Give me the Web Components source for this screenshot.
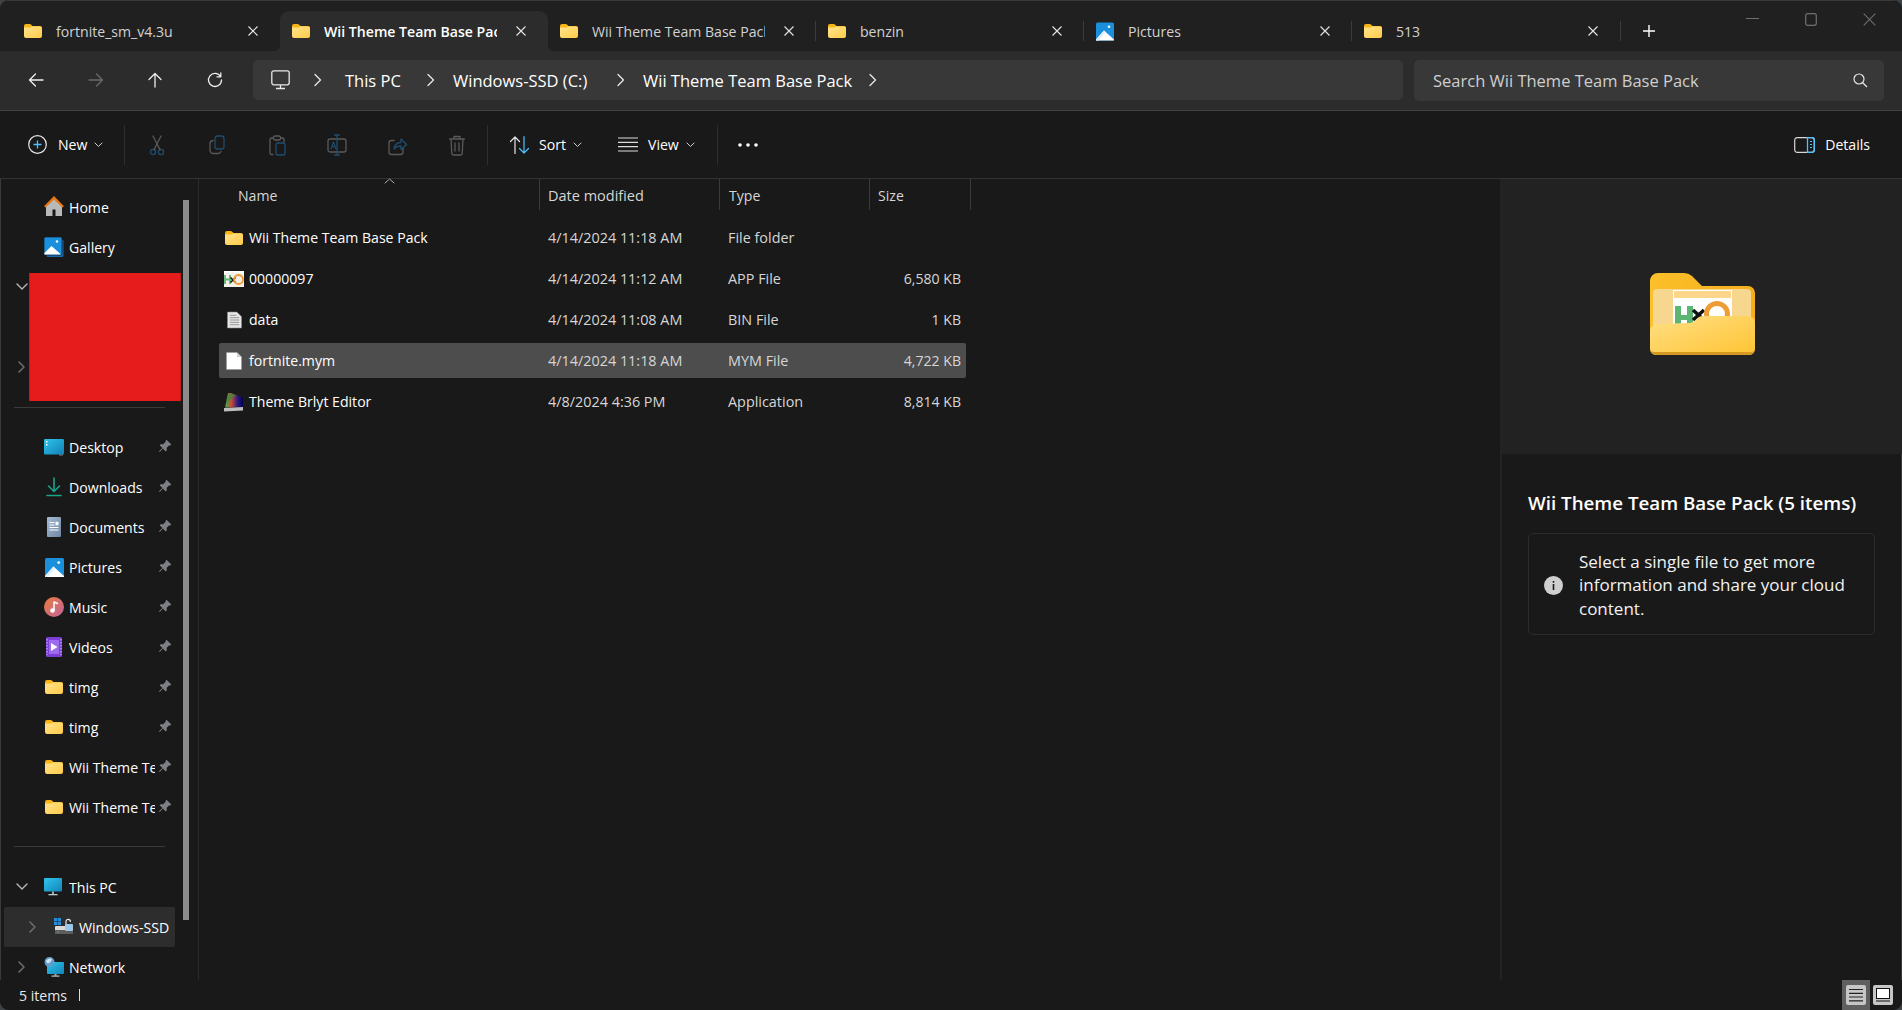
<!DOCTYPE html>
<html lang="en"><head><meta charset="utf-8"><title>File Explorer</title>
<style>
html,body{margin:0;height:100%;background:#3d4247;overflow:hidden}
body{font-family:"Open Sans","Noto Sans",sans-serif;color:#fff}
</style></head>
<body>
<fx-window>
  <fx-tabbar slot="tabs">
    <fx-tab icon="folder">fortnite_sm_v4.3u</fx-tab>
    <fx-tab icon="folder" active>Wii Theme Team Base Pack</fx-tab>
    <fx-tab icon="folder">Wii Theme Team Base Pack</fx-tab>
    <fx-tab icon="folder" sep>benzin</fx-tab>
    <fx-tab icon="pictures" sep>Pictures</fx-tab>
    <fx-tab icon="folder" sep>513</fx-tab>
  </fx-tabbar>
  <fx-navbar slot="nav"></fx-navbar>
  <fx-commandbar slot="cmd"></fx-commandbar>
  <fx-sidebar slot="side">
    <fx-nav-item icon="home">Home</fx-nav-item>
    <fx-nav-item icon="gallery">Gallery</fx-nav-item>
    <fx-redacted></fx-redacted>
    <fx-divider></fx-divider>
    <fx-nav-item icon="desktop" pin>Desktop</fx-nav-item>
    <fx-nav-item icon="downloads" pin>Downloads</fx-nav-item>
    <fx-nav-item icon="documents" pin>Documents</fx-nav-item>
    <fx-nav-item icon="pictures" pin>Pictures</fx-nav-item>
    <fx-nav-item icon="music" pin>Music</fx-nav-item>
    <fx-nav-item icon="videos" pin>Videos</fx-nav-item>
    <fx-nav-item icon="folder" pin>timg</fx-nav-item>
    <fx-nav-item icon="folder" pin>timg</fx-nav-item>
    <fx-nav-item icon="folder" pin>Wii Theme Team Base Pack</fx-nav-item>
    <fx-nav-item icon="folder" pin>Wii Theme Team Base Pack</fx-nav-item>
    <fx-divider tall></fx-divider>
    <fx-nav-item icon="pc" chevron="down">This PC</fx-nav-item>
    <fx-nav-item icon="drive" chevron="right" indent selected>Windows-SSD (C:)</fx-nav-item>
    <fx-nav-item icon="network" chevron="right">Network</fx-nav-item>
  </fx-sidebar>
  <fx-filelist slot="files">
    <fx-file icon="folder" date="4/14/2024 11:18 AM" type="File folder" size="">Wii Theme Team Base Pack</fx-file>
    <fx-file icon="hxd" date="4/14/2024 11:12 AM" type="APP File" size="6,580 KB">00000097</fx-file>
    <fx-file icon="textfile" date="4/14/2024 11:08 AM" type="BIN File" size="1 KB">data</fx-file>
    <fx-file icon="blank" date="4/14/2024 11:18 AM" type="MYM File" size="4,722 KB" selected>fortnite.mym</fx-file>
    <fx-file icon="brlyt" date="4/8/2024 4:36 PM" type="Application" size="8,814 KB">Theme Brlyt Editor</fx-file>
  </fx-filelist>
  <fx-details slot="details"></fx-details>
  <fx-statusbar slot="status"></fx-statusbar>
</fx-window>
<script>
const folderSvg=(id)=>`<svg viewBox="0 0 18 14" width="18" height="14"><path d="M0 2a2 2 0 0 1 2-2h3.6a2 2 0 0 1 1.3.5L8.6 2H16a2 2 0 0 1 2 2v3H0z" fill="#f7b516"/><path d="M0 3.6h6.5l1.4-1H16a2 2 0 0 1 2 2V12a2 2 0 0 1-2 2H2a2 2 0 0 1-2-2z" fill="url(#${id})"/><defs><linearGradient id="${id}" x1="0" y1="0" x2="1" y2="1"><stop offset="0" stop-color="#ffe48f"/><stop offset="1" stop-color="#ffcb47"/></linearGradient></defs></svg>`;
const picSvg=(w=19,h=19)=>`<svg viewBox="0 0 18 18" width="${w}" height="${h}"><rect width="18" height="18" rx="1.5" fill="#1a8fdc"/><circle cx="13" cy="4.3" r="1.3" fill="#fff"/><path d="M0 17 8 8l10 9v1H0z" fill="#fff"/><path d="M0 17 8 8l1.5 1.4L3 18H0z" fill="#dfeefa"/></svg>`;
const S=(c,w=1.3)=>`fill="none" stroke="${c}" stroke-width="${w}" stroke-linecap="round" stroke-linejoin="round"`;
const G='#5a5a5a',B='#1f4d6e';
const ICONS={
 folder:()=>folderSvg('f'+Math.random().toString(36).slice(2)),
 pictures:()=>picSvg(),
 home:()=>`<svg viewBox="0 0 20 20" width="20" height="20"><path d="M2 9v11h6.500v-6.500h3V20H18V9l-8-6.500z" fill="#b9b9b9"/><path d="M0 10.200 10 0l10 10.200-1.600 1.300L10 3.500 1.600 11.500z" fill="#e8760f"/></svg>`,
 gallery:()=>`<svg viewBox="0 0 20 20" width="20" height="20"><rect x="2.5" y="2.5" width="17" height="17.5" rx="1.5" fill="#1d66b0"/><rect width="18" height="18" rx="1.5" fill="#1a8fdc" stroke="#191919" stroke-width=".7"/><circle cx="13" cy="4.5" r="1.2" fill="#fff"/><path d="M.4 16 7.5 9l9 8v.6H.4z" fill="#fff"/></svg>`,
 desktop:()=>`<svg viewBox="0 0 20 17" width="20" height="17"><defs><linearGradient id="dk" x1="0" y1="0" x2="1" y2="1"><stop offset="0" stop-color="#2ec4ea"/><stop offset="1" stop-color="#1380b8"/></linearGradient></defs><rect width="20" height="15.5" rx="1.2" fill="url(#dk)"/><rect x="2" y="2" width="1.5" height="1.5" fill="#fff"/><rect x="2" y="5" width="1.5" height="1.5" fill="#fff"/><rect x="15.500" y="15.500" width="1" height="1" fill="#cde"/><rect x="17.500" y="15.500" width="1" height="1" fill="#cde"/></svg>`,
 downloads:()=>`<svg viewBox="0 0 20 20" width="20" height="20"><path d="M10 1v13M4.500 9l5.500 5.500L15.500 9M3 18.500h14" ${S('#1aa38a',1.6)}/></svg>`,
 documents:()=>`<svg viewBox="0 0 20 20" width="20" height="20"><defs><linearGradient id="dc" x1="0" y1="0" x2="1" y2="1"><stop offset="0" stop-color="#a5bad2"/><stop offset="1" stop-color="#6f88a4"/></linearGradient></defs><rect x="3" y="0" width="14" height="20" rx="1" fill="url(#dc)"/><path d="M5.500 5.500h5M5.500 8h5M5.500 10.500h9M5.500 13h9" stroke="#fff" stroke-width="1"/><rect x="11.500" y="4.800" width="3" height="3.500" fill="#fff"/></svg>`,
 music:()=>`<svg viewBox="0 0 20 20" width="20" height="20"><defs><linearGradient id="mu" x1="0" y1="0" x2="1" y2="1"><stop offset="0" stop-color="#ea7b3e"/><stop offset="1" stop-color="#c1649c"/></linearGradient></defs><circle cx="10" cy="10" r="10" fill="url(#mu)"/><circle cx="8.500" cy="13.500" r="2.300" fill="#fff"/><path d="M10 13.500V5l3.500 1.500" ${S('#fff',1.5)}/></svg>`,
 videos:()=>`<svg viewBox="0 0 16 20" width="16" height="20"><rect width="16" height="20" rx="1.5" fill="#7c3fd6"/><rect x="3" y="3" width="10" height="14" fill="#9d6bee"/><path d="M1 2v16M15 2v16" stroke="#c8aef5" stroke-width="1.200" stroke-dasharray="1.500 1.500"/><path d="M5 6l6.500 4L5 14z" fill="#fff"/></svg>`,
 pc:()=>`<svg viewBox="0 0 20 19" width="20" height="19"><defs><linearGradient id="pc" x1="0" y1="0" x2="1" y2="1"><stop offset="0" stop-color="#2fc6ea"/><stop offset="1" stop-color="#1284bb"/></linearGradient></defs><rect y="0" width="18" height="13.500" rx="1" fill="url(#pc)"/><rect x="8" y="13.500" width="2" height="2.500" fill="#9aa"/><rect x="4.500" y="16" width="9" height="1.300" fill="#bcc"/></svg>`,
 drive:()=>`<svg viewBox="0 0 20 18" width="20" height="18"><g fill="#1f8fe0"><rect x="0" y="0" width="3.200" height="3.200"/><rect x="3.800" y="0" width="3.200" height="3.200"/><rect x="0" y="3.800" width="3.200" height="3.200"/><rect x="3.800" y="3.800" width="3.200" height="3.200"/></g><rect x="1" y="8" width="18" height="8" rx="1" fill="#d9d9d9"/><rect x="1" y="12" width="18" height="4" fill="#5d5d5d"/><rect x="3" y="13.500" width="1.500" height="1" fill="#3fd04f"/><path d="M12 7V3.500a2.200 2.200 0 0 1 4.400 0" ${S('#e5e5e5',1.2)}/><rect x="11" y="6" width="8" height="7" rx="1" fill="#9cc7e6"/></svg>`,
 network:()=>`<svg viewBox="0 0 20 20" width="20" height="20"><defs><linearGradient id="nw" x1="0" y1="0" x2="1" y2="1"><stop offset="0" stop-color="#2fc6ea"/><stop offset="1" stop-color="#1284bb"/></linearGradient></defs><rect x="3" y="5" width="17" height="12" rx="1" fill="url(#nw)"/><rect x="10.500" y="17" width="2" height="1.800" fill="#9aa"/><rect x="7.500" y="18.500" width="8" height="1.200" fill="#bcc"/><circle cx="5.500" cy="5" r="5" fill="#5f9fd0"/><path d="M2 4c2-3 5-3 6-2-1 3-3 5-5 4z" fill="#d0e6f7"/></svg>`,
 hxd:()=>`<svg viewBox="0 0 20 16" width="20" height="16"><rect width="20" height="16" fill="#f4f1ea"/><rect y="0" width="20" height="2" fill="#fff"/><path d="M1 4v9M6 4v9M1 8.500h5" stroke="#5fb574" stroke-width="1.800" fill="none"/><path d="M6.500 6.500l5 5M11.500 6.500l-5 5" stroke="#111" stroke-width="1.500"/><circle cx="14.500" cy="8.500" r="4.500" fill="none" stroke="#ee9c35" stroke-width="1.800"/></svg>`,
 textfile:()=>`<svg viewBox="0 0 16 18" width="15" height="18"><path d="M.5.500h10l5 5v12H.5z" fill="#e6e6e6" stroke="#8a8a8a" stroke-width=".6"/><path d="M3 4h7M3 6.500h10M3 9h10M3 11.500h10M3 14h10" stroke="#8a8a8a" stroke-width=".9"/></svg>`,
 blank:()=>`<svg viewBox="0 0 16 18" width="16" height="18"><path d="M.5.500h10.500l4.500 4.500v12.500H.5z" fill="#fff" stroke="#999" stroke-width=".5"/><path d="M11 .500V5h4.500z" fill="#cfcfcf"/></svg>`,
 brlyt:()=>`<svg viewBox="0 0 20 20" width="20" height="20"><defs><linearGradient id="bg1" x1="0" y1="0" x2="1" y2="0"><stop offset="0" stop-color="#2fb04a"/><stop offset=".35" stop-color="#d04a30"/><stop offset=".7" stop-color="#2a1a80"/><stop offset="1" stop-color="#000050"/></linearGradient></defs><path d="M4 1h3l12 4.500V15L1 15.500z" fill="url(#bg1)"/><path d="M5 1 12 3 3 11z" fill="#2f8f3a" opacity=".7"/><path d="M0 16l19-1v3.500L0 19.500z" fill="#bdbdbd"/></svg>`,
 pin:()=>`<svg viewBox="0 0 14 14" width="14" height="14"><path d="M8.500.7l4.800 4.800-1 .9-1-.2-2.600 2.600.1 2.500-1.100 1.100L4.900 9.600 1.700 13l-.7-.7 3.400-3.200L1.600 6.300l1.100-1.100 2.500.1 2.600-2.600-.2-1z" fill="#7b8186"/></svg>`
};
const mk=(css,html)=>{const t=document.createElement('template');t.innerHTML=`<style>${css}</style>${html}`;return t};
class Base extends HTMLElement{
  constructor(){super();this.attachShadow({mode:'open'});}
  render(css,html){this.shadowRoot.appendChild(mk(css,html).content.cloneNode(true));}
}
customElements.define('fx-window',class extends Base{connectedCallback(){this.render(`
 :host{display:flex;flex-direction:column;height:1010px;width:1902px;box-sizing:border-box;background:#191919;border-radius:9px;overflow:hidden;font-family:"Open Sans","Noto Sans",sans-serif;color:#fff;box-shadow:inset 0 0 0 1px #3a3a3a}
 .main{flex:1;display:flex;min-height:0}
 `,`<slot name="tabs"></slot><slot name="nav"></slot><slot name="cmd"></slot><div class="main"><slot name="side"></slot><slot name="files"></slot><slot name="details"></slot></div><slot name="status"></slot>`)}});
customElements.define('fx-tabbar',class extends Base{connectedCallback(){this.render(`
 :host{display:flex;height:51px;background:#202020;padding-left:12px;align-items:flex-end;position:relative;box-shadow:inset 0 1px 0 #3a3a3a}
 .plus{width:58px;height:40px;display:flex;align-items:center;justify-content:center;margin-right:auto;margin-left:0}
 .ctl{display:flex;align-self:flex-start;margin-right:3px}
 .ctl div{width:58.500px;height:38px;display:flex;align-items:center;justify-content:center}
 `,`<slot></slot><div class="plus"><svg width="14" height="14" viewBox="0 0 14 14"><path d="M7 1v12M1 7h12" stroke="#fff" stroke-width="1.400"/></svg></div>
 <div class="ctl"><div><svg width="13" height="2"><rect width="13" height="1" fill="#6f6f6f"/></svg></div><div><svg width="12" height="13"><rect x=".7" y=".7" width="10.600" height="11.600" rx="2" fill="none" stroke="#6f6f6f" stroke-width="1.200"/></svg></div><div><svg width="13" height="13"><path d="M.7.700l11.600 11.600M12.300.700.700 12.300" stroke="#6f6f6f" stroke-width="1.100"/></svg></div></div>`)}});
customElements.define('fx-tab',class extends Base{connectedCallback(){this.render(`
 :host{display:flex;align-items:center;width:268px;height:40px;box-sizing:border-box;padding-left:12px;position:relative;font-size:14.100px;color:#d2d2d2}
 :host([active]){background:#2c2c2c;border-radius:9px 9px 0 0;color:#fff;font-weight:600}
 :host([active])::before,:host([active])::after{content:"";position:absolute;bottom:0;width:6px;height:6px}
 :host([active])::before{left:-6px;background:radial-gradient(circle at 0 0,transparent 6px,#2c2c2c 6.500px)}
 :host([active])::after{right:-6px;background:radial-gradient(circle at 100% 0,transparent 6px,#2c2c2c 6.500px)}
 :host([sep])::before{content:"";position:absolute;left:-1px;top:10px;height:20px;width:1px;background:#3c3c3c}
 .i{width:18px;display:flex;justify-content:center;flex:none}
 .t{margin-left:14px;width:173px;overflow:hidden;white-space:nowrap;flex:none}
 .x{position:absolute;left:236px;top:15px;width:10px;height:10px}
 .end{position:absolute;right:-1px;top:10px;height:20px;width:1px;background:#3c3c3c;display:none}
 :host(:last-child) .end{display:block}
 `,`<span class="i">${ICONS[this.getAttribute('icon')]()}</span><span class="t"><slot></slot></span><svg class="x" viewBox="0 0 10 10"><path d="M.5.500l9 9M9.500.500l-9 9" stroke="#e6e6e6" stroke-width="1.100"/></svg><span class="end"></span>`)}});
customElements.define('fx-navbar',class extends Base{connectedCallback(){
 const chev=`<svg class="c" width="8" height="14" viewBox="0 0 8 14"><path d="M1 1.500 6.500 7 1 12.500" ${S('#e8e8e8',1.300)}/></svg>`;
 this.render(`
 :host{display:flex;align-items:center;height:60px;box-sizing:border-box;background:#2c2c2c;border-bottom:1px solid #404040;padding:0 18px 1px 6px;font-size:16.500px}
 .b{width:59.750px;display:flex;justify-content:center;flex:none}
 .addr{flex:1;height:40px;background:#383838;border-radius:5px;margin-left:8px;display:flex;align-items:center;color:#fff;white-space:nowrap}
 .search{width:470px;height:41px;background:#383838;border-radius:5px;margin-left:11px;display:flex;align-items:center;padding:0 16px 0 19px;box-sizing:border-box;color:#cfcfcf;justify-content:space-between;white-space:nowrap}
 .mon{margin-left:18px}.c{flex:none}
 .addr span{display:block}
 `,`<div class="b"><svg width="16" height="16" viewBox="0 0 16 16"><path d="M15 8H1.500M7.500 2 1.500 8l6 6" ${S('#eee',1.300)}/></svg></div>
 <div class="b"><svg width="16" height="16" viewBox="0 0 16 16"><path d="M1 8h13.500M8.500 2l6 6-6 6" ${S('#6a6a6a',1.300)}/></svg></div>
 <div class="b"><svg width="16" height="16" viewBox="0 0 16 16"><path d="M8 15V1.500M2 7.500l6-6 6 6" ${S('#eee',1.300)}/></svg></div>
 <div class="b"><svg width="16" height="16" viewBox="0 0 16 16"><path d="M13.500 4.500A6.500 6.500 0 1 0 14.500 8M13.800 1v3.800H10" ${S('#eee',1.300)}/></svg></div>
 <div class="addr"><svg class="mon" width="19" height="20" viewBox="0 0 19 20"><rect x=".8" y=".8" width="17.400" height="14" rx="2" fill="none" stroke="#e8e8e8" stroke-width="1.300"/><path d="M9.500 15v3M5 18.500h9" stroke="#e8e8e8" stroke-width="1.300"/></svg>
 <span style="width:24px"></span>${chev}<span style="margin-left:23px;width:66px">This PC</span><span style="width:16px"></span>${chev}<span style="margin-left:18px;width:146px">Windows-SSD (C:)</span><span style="width:18px"></span>${chev}<span style="margin-left:18px;width:208px">Wii Theme Team Base Pack</span><span style="width:18px"></span>${chev}</div>
 <div class="search"><span>Search Wii Theme Team Base Pack</span><svg width="15" height="15" viewBox="0 0 15 15"><circle cx="6" cy="6" r="5" fill="none" stroke="#e8e8e8" stroke-width="1.200"/><path d="M9.500 9.500l4.500 4.500" stroke="#e8e8e8" stroke-width="1.300"/></svg></div>`)}});
customElements.define('fx-commandbar',class extends Base{connectedCallback(){
 const dn=`<svg class="dn" width="9" height="6" viewBox="0 0 9 6"><path d="M1 1l3.500 3.500L8 1" ${S('#cfcfcf',1)}/></svg>`;
 const ib=(s)=>`<div class="ib"><svg width="22" height="22" viewBox="0 0 22 22">${s}</svg></div>`;
 this.render(`
 :host{display:flex;align-items:center;height:68px;box-sizing:border-box;background:#191919;border-bottom:1px solid #333;font-size:14.100px;color:#fff;padding-bottom:0}
 .new{display:flex;align-items:center;width:124px;padding-left:28px;box-sizing:border-box;flex:none}
 .sep{width:1px;height:40px;background:#2e2e2e;flex:none}
 .ib{width:60px;display:flex;justify-content:center;flex:none}
 .txt{display:flex;align-items:center;flex:none;box-sizing:border-box}
 .dn{margin-left:7px}
 .spacer{flex:1}
 `,`<div class="new"><svg width="19" height="19" viewBox="0 0 19 19"><circle cx="9.500" cy="9.500" r="8.800" fill="none" stroke="#e8e8e8" stroke-width="1.200"/><path d="M9.500 5.500v8M5.500 9.500h8" stroke="#4cc2ff" stroke-width="1.300"/></svg><span style="margin-left:11px">New</span>${dn}</div><div class="sep"></div>
 <div style="width:2px"></div>
 ${ib(`<circle cx="7" cy="18" r="2.600" ${S(B)}/><circle cx="15" cy="18" r="2.600" ${S(B)}/><path d="M8 15.800 15 2M14 15.800 7 2" ${S(G)}/>`)}
 ${ib(`<rect x="9" y="2" width="9" height="13" rx="2.500" ${S(B)}/><path d="M7 6.500c-2 .3-3 1.500-3 3V16c0 2 1.500 3.500 3.500 3.500H12c1.500 0 2.500-.7 3-2" ${S(G)}/>`)}
 ${ib(`<path d="M7 4H5.500C4.500 4 4 4.700 4 5.500V19c0 1 .6 1.500 1.500 1.500H7M15 4h1.500c1 0 1.500.7 1.500 1.500V8" ${S(G)}/><rect x="7.500" y="2" width="7" height="4" rx="1.500" ${S(G)}/><rect x="10" y="9" width="9" height="12" rx="2" ${S(B)}/>`)}
 ${ib(`<rect x="2" y="5" width="18" height="13" rx="2" ${S(G)}/><path d="M11 1v20M8.500 1h5M8.500 21h5" ${S(B)}/><path d="M5 15l2.500-7 2.500 7M6 12.800h3" ${S(B,1.100)}/>`)}
 ${ib(`<path d="M17 14v4c0 1.500-1 2.500-2.500 2.500h-9C4 20.500 3 19.500 3 18V9c0-1.500 1-2.500 2.500-2.500H8" ${S(G)}/><path d="M8 15c.5-4 3-6.500 7-6.500V5l5.500 5.500-5.500 5V12c-3 0-5.500 1-7 3z" ${S(B)}/>`)}
 ${ib(`<path d="M3.500 5h15M8 5V2.500h6V5M5 5l.8 14.500c0 1 .7 1.500 1.500 1.500h7.400c.8 0 1.500-.5 1.500-1.500L17 5M9 9v8M13 9v8" ${S(G)}/>`)}
 <div class="sep"></div><div style="width:3px"></div>
 <div class="txt" style="width:113px;padding-left:18px"><svg width="21" height="20" viewBox="0 0 21 20"><path d="M6 18.500V2M1.500 6.500 6 2l4.500 4.500" ${S('#e8e8e8',1.200)}/><path d="M15 1.500V18M10.500 13.500 15 18l4.500-4.500" ${S('#4cc2ff',1.200)}/></svg><span style="margin-left:9px">Sort</span>${dn}</div>
 <div class="txt" style="width:113px;padding-left:14px"><svg width="20" height="15" viewBox="0 0 20 15"><path d="M0 1h20M0 5.300h20M0 9.600h20M0 14h20" stroke="#dcdcdc" stroke-width="1.200"/></svg><span style="margin-left:10px">View</span>${dn}</div>
 <div class="sep"></div>
 <div class="ib"><svg width="20" height="4"><circle cx="2" cy="2" r="1.800" fill="#fff"/><circle cx="10" cy="2" r="1.800" fill="#fff"/><circle cx="18" cy="2" r="1.800" fill="#fff"/></svg></div>
 <div class="spacer"></div>
 <div class="txt" style="padding-right:32px"><svg width="21" height="16" viewBox="0 0 21 16"><rect x=".7" y=".7" width="19.600" height="14.600" rx="2.500" fill="none" stroke="#d8d8d8" stroke-width="1.200"/><path d="M13.500.7h4.300c1.500 0 2.500 1 2.500 2.500v9.600c0 1.500-1 2.500-2.500 2.500h-4.300z" fill="none" stroke="#4cc2ff" stroke-width="1.300"/><path d="M16 4.500h2M16 7.500h2M16 10.500h2" stroke="#4cc2ff" stroke-width="1.100"/></svg><span style="margin-left:10px">Details</span></div>`)}});
customElements.define('fx-sidebar',class extends Base{connectedCallback(){this.render(`
 :host{display:block;width:199px;flex:none;box-sizing:border-box;padding-top:8px;overflow:hidden;position:relative;border-right:1px solid #2b2b2b;font-size:14.100px}
 .thumb{position:absolute;left:183px;top:21px;width:6px;height:720px;background:#8c8c8c}
 `,`<slot></slot><div class="thumb"></div>`)}});
customElements.define('fx-nav-item',class extends Base{connectedCallback(){
 const ch=this.getAttribute('chevron');
 const chev=ch==='down'?`<path d="M1 3l5 5 5-5" ${S('#b8b8b8',1.400)}/>`:ch==='right'?`<path d="M3 1l5 5-5 5" ${S('#6e6e6e',1.500)}/>`:'';
 const ind=this.hasAttribute('indent');
 this.render(`
 :host{display:flex;align-items:center;height:40px;margin:0 23px 0 4px;box-sizing:border-box;border-radius:2px;padding:0 5px 0 ${ind?50:40}px;position:relative;white-space:nowrap;color:#fff}
 :host([selected]){background:#2d2d2d}
 .i{width:20px;height:20px;flex:none;display:flex;align-items:center;justify-content:center;position:relative;top:${this.getAttribute('icon')==='home'?-1:0}px}
 .t{margin-left:5px;overflow:hidden;flex:1;min-width:0}
 .p{position:absolute;left:154px;top:12px;display:flex;background:#191919}
 .ch{position:absolute;left:${ind?23:12}px;top:14px}
 :host([pin]) .t{flex:none;width:86px}
 `,`${chev?`<svg class="ch" width="12" height="12" viewBox="0 0 12 12">${chev}</svg>`:''}<span class="i">${ICONS[this.getAttribute('icon')]()}</span><span class="t"><slot></slot></span>${this.hasAttribute('pin')?`<span class="p">${ICONS.pin()}</span>`:''}`)}});
customElements.define('fx-divider',class extends Base{connectedCallback(){this.render(`
 :host{display:flex;align-items:flex-start;height:20px;padding:0 33px 0 14px}
 :host([tall]){height:21px;padding-top:19px}
 div{height:1px;width:100%;background:#3a3a3a;margin-top:0}
 `,`<div></div>`)}});
customElements.define('fx-redacted',class extends Base{connectedCallback(){this.render(`
 :host{display:flex;height:140px;box-sizing:border-box;padding-top:6px}
 .c{width:29px;position:relative;flex:none}
 .c svg{position:absolute;left:16px}
 .r{width:152px;height:128px;background:#e61c1c;flex:none;box-shadow:inset 1px 0 #c11a1a,inset -1px 0 #c11a1a}
 `,`<div class="c"><svg style="top:8px" width="12" height="12" viewBox="0 0 12 12"><path d="M1 3l5 5 5-5" ${S('#b8b8b8',1.400)}/></svg><svg style="top:88px" width="12" height="12" viewBox="0 0 12 12"><path d="M3 1l5 5-5 5" ${S('#6e6e6e',1.500)}/></svg></div><div class="r"></div>`)}});
customElements.define('fx-filelist',class extends Base{connectedCallback(){this.render(`
 :host{display:block;flex:1;min-width:0;font-size:14.100px;color:#d6d6d6}
 .h{display:grid;grid-template-columns:321px 180px 150px 101px;height:31px;margin-left:20px;width:772px;position:relative;align-items:center;font-size:14.500px}
 .h div{height:31px;line-height:33px;border-right:1px solid #3a3a3a;box-sizing:border-box;padding-left:8px;white-space:nowrap}
 .h div:first-child{padding-left:19px;font-size:14.100px}
 .h div:nth-child(3){padding-left:9px;font-size:14.100px}
 .h div:nth-child(4){padding-left:8px;font-size:14.100px}
 .a{position:absolute;left:165px;top:-1px}
 .rows{display:flex;flex-direction:column;gap:6px;margin-left:20px;margin-top:10px;padding-top:0}
 `,`<div class="h"><div>Name</div><div>Date modified</div><div>Type</div><div>Size</div><svg class="a" width="11" height="6" viewBox="0 0 11 6"><path d="M1 5l4.500-4L10 5" ${S('#aaa',1)}/></svg></div><div class="rows"><slot></slot></div>`)}});
customElements.define('fx-file',class extends Base{connectedCallback(){const g=k=>this.getAttribute(k);this.render(`
 :host{display:grid;grid-template-columns:321px 180px 150px 91px;width:747px;height:35px;align-items:center;border-radius:2px;white-space:nowrap}
 :host([selected]){background:#4d4d4d}
 .n{display:flex;align-items:center;color:#fff}
 .i{width:20px;margin-left:5px;display:flex;justify-content:center;flex:none}
 .t{margin-left:5px}
 .d{padding-left:8px;box-sizing:border-box;font-size:14.400px}
 .s{text-align:right}
 `,`<div class="n"><span class="i">${ICONS[g('icon')]()}</span><span class="t"><slot></slot></span></div><div class="d">${g('date')}</div><div class="d">${g('type')}</div><div class="s">${g('size')}</div>`)}});
customElements.define('fx-details',class extends Base{connectedCallback(){this.render(`
 :host{display:block;width:402px;flex:none;box-sizing:border-box;border-left:2px solid #232323}
 .pv{height:275px;background:#222;display:flex;justify-content:center;padding-top:94px;box-sizing:border-box;margin-left:0}
 .b{padding:0 27px 0 26px}
 h2{margin:35px 0 17px;font-size:18.750px;font-weight:600;line-height:27px;color:#fff;white-space:nowrap}
 .card{border:1px solid #2c2c2c;border-radius:5px;height:102px;box-sizing:border-box;display:flex;align-items:center;padding-left:15px;padding-top:2px;font-size:17px;line-height:23.500px;color:#f2f2f2}
 .card svg{flex:none;margin-right:16px}
 `,`<div class="pv"><svg width="105" height="82" viewBox="0 0 105 82">
 <defs><linearGradient id="pf" x1="0" y1="0" x2="1" y2="1"><stop offset="0" stop-color="#ffdf85"/><stop offset="1" stop-color="#ffc433"/></linearGradient><linearGradient id="pb" x1="0" y1="0" x2="1" y2="0"><stop offset="0" stop-color="#fbc02a"/><stop offset="1" stop-color="#f4ae1e"/></linearGradient></defs>
 <path d="M0 8a8 8 0 0 1 8-8h26a12 12 0 0 1 8 3l9 9 1 1h46a7 7 0 0 1 7 7v38H0z" fill="url(#pb)"/>
 <rect x="3" y="16" width="98" height="42" rx="4" fill="#f7d78f"/>
 <rect x="23" y="17" width="59" height="34" fill="#fff"/><rect x="24" y="18" width="57" height="7" fill="#fbd68b"/>
 <path d="M25 33v24h6V47h6v10h6V33h-6v9h-6v-9z" fill="#5db574"/>
 <path d="M43 37l11 10M54 37 43 47" stroke="#111" stroke-width="3.500"/>
 <circle cx="67" cy="41" r="10.500" fill="#fff" stroke="#ee9c35" stroke-width="5"/>
 <path d="M0 58a7 7 0 0 1 7-7l32-1c3 0 5-1 7-3l1-1c2-2 3-3 6-3h45a7 7 0 0 1 7 7v26a6 6 0 0 1-6 6H6a6 6 0 0 1-6-6z" fill="url(#pf)"/>
 <path d="M0 76a6 6 0 0 0 6 6h93a6 6 0 0 0 6-6v-1a4 4 0 0 1-4 4H4a4 4 0 0 1-4-4z" fill="#d49a22"/>
 </svg></div><div class="b"><h2>Wii Theme Team Base Pack (5 items)</h2><div class="card"><svg width="19" height="19" viewBox="0 0 19 19"><circle cx="9.500" cy="9.500" r="9.500" fill="#cfcfcf"/><rect x="8.700" y="8" width="1.600" height="6" fill="#191919"/><rect x="8.700" y="5" width="1.600" height="1.700" fill="#191919"/></svg><span>Select a single file to get more<br>information and share your cloud<br>content.</span></div></div>`)}});
customElements.define('fx-statusbar',class extends Base{connectedCallback(){this.render(`
 :host{display:flex;align-items:center;height:30px;flex:none;background:#191919;font-size:14.100px;color:#e8e8e8;padding-left:19px;position:relative;box-sizing:border-box}
 .bar{width:1px;height:12px;background:#ddd;margin-left:12px}
 .v{margin-left:auto;display:flex;align-items:center;margin-right:9px}
 .on{width:28px;height:30px;background:#5f5f5f;display:flex;align-items:center;justify-content:center}
 .tile{width:20px;height:20px;background:#c6c6c6;border-radius:2px;display:flex;align-items:center;justify-content:center}
 .off{margin-left:3px}
 `,`<span>5 items</span><span class="bar"></span><div class="v"><div class="on"><div class="tile"><svg width="14" height="14"><path d="M0 1.500h14M0 5.300h14M0 9h14M0 12.800h14" stroke="#222" stroke-width="1.200"/></svg></div></div><div class="tile off"><svg width="14" height="14"><rect x=".5" y=".5" width="13" height="10" fill="#fff" stroke="#111"/><path d="M0 13h14" stroke="#111" stroke-width="1.200"/></svg></div></div>`)}});
</script>
</body></html>
